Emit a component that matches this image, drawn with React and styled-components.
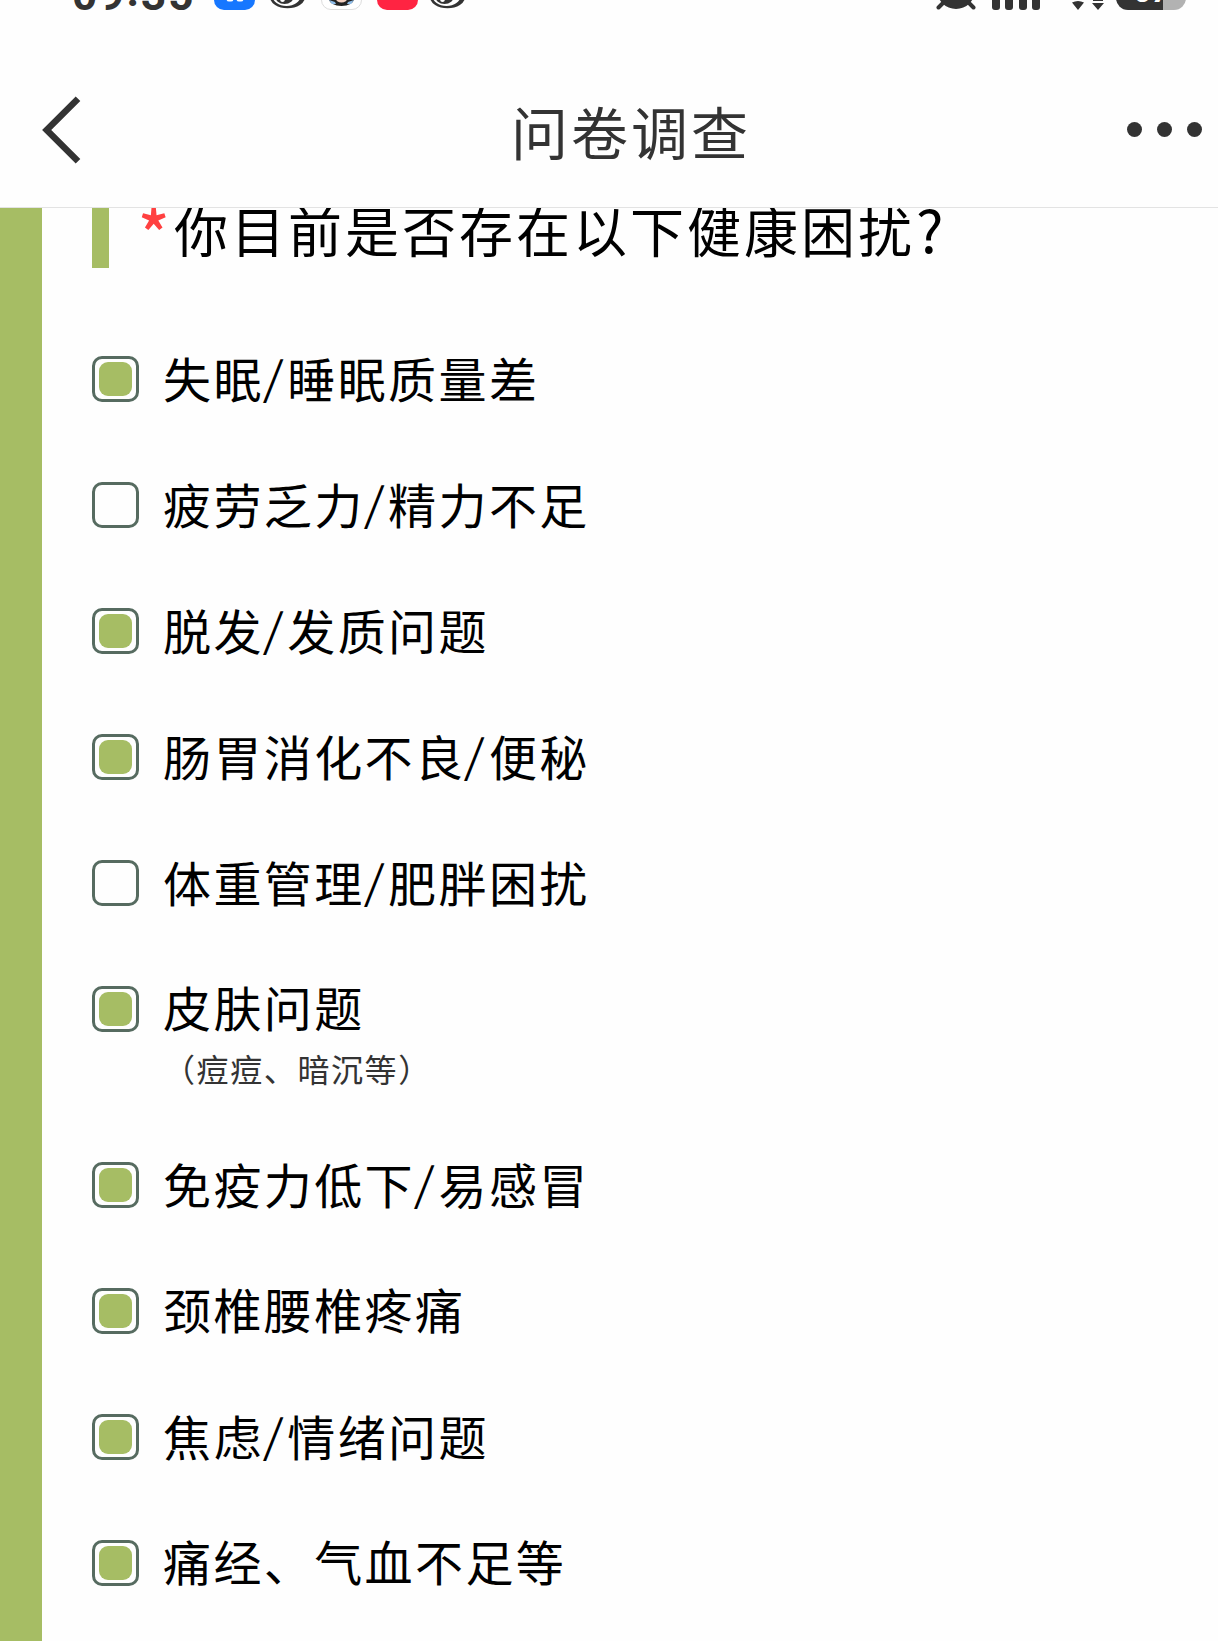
import React, { useState } from 'react'
import styled, { createGlobalStyle } from 'styled-components'

const list = [
  { name: '失眠/睡眠质量差', on: true },
  { name: '疲劳乏力/精力不足', on: false },
  { name: '脱发/发质问题', on: true },
  { name: '肠胃消化不良/便秘', on: true },
  { name: '体重管理/肥胖困扰', on: false },
  { name: '皮肤问题', note: '（痘痘、暗沉等）', on: true },
  { name: '免疫力低下/易感冒', on: true },
  { name: '颈椎腰椎疼痛', on: true },
  { name: '焦虑/情绪问题', on: true },
  { name: '痛经、气血不足等', on: true },
]

function Eye() {
  return (
    <svg width="35" height="10" viewBox="0 0 35 10">
      <ellipse cx="17.5" cy="-3" rx="17.5" ry="11.2" fill="#333" />
      <ellipse cx="16.5" cy="-4" rx="14" ry="10" fill="#fff" />
      <ellipse cx="14.5" cy="-4" rx="9.5" ry="8" fill="#333" />
      <circle cx="12.5" cy="-0.5" r="2.4" fill="#fff" />
    </svg>
  )
}

function StatusBar() {
  return (
    <Status>
      <Clock>09<span>:</span>35</Clock>
      <Apps>
        <AppIcon $color="#1677ff">
          <svg width="41" height="10" viewBox="0 0 41 10">
            <path d="M15 -1h2M25 -1h2" stroke="#fff" strokeWidth="5" strokeLinecap="round" />
          </svg>
        </AppIcon>
        <Eye />
        <AppIcon $color="#fff" $line>
          <svg width="39" height="9" viewBox="0 0 39 9">
            <ellipse cx="19.5" cy="-1" rx="12.5" ry="7" fill="#222" />
            <path d="M7 0l6 2 1 2-4 0zM32 0l-6 2-1 2 4 0z" fill="#8ebce8" />
            <ellipse cx="19.5" cy="-2" rx="6" ry="4.5" fill="#f3d0c0" />
          </svg>
        </AppIcon>
        <AppIcon $color="#ff2442" />
        <Eye />
      </Apps>
      <System>
        <svg width="40" height="10" viewBox="0 0 40 10">
          <circle cx="20" cy="-10" r="19" fill="#333" />
          <path d="M7 3L2.5 7.5M33 3l4.5 4.5" stroke="#333" strokeWidth="4" strokeLinecap="round" />
        </svg>
        <Signal>
          <i /><i /><i /><i />
        </Signal>
        <Arrows width="32" height="10" viewBox="0 0 32 10">
          <path d="M0 2.5q6-3 12 0L6 10zM20 3h12L26 10zM21 0h10v1H21z" fill="#333" />
        </Arrows>
        <Battery>67</Battery>
      </System>
    </Status>
  )
}

function Option({ item }) {
  const [on, setOn] = useState(item.on)
  const parts = item.name.split('/')
  return (
    <Row onClick={() => setOn(!on)}>
      <Box>{on && <Fill />}</Box>
      <Texts>
        <Label>
          {parts[0]}
          {parts[1] && <Slash>/</Slash>}
          {parts[1]}
        </Label>
        {item.note && <Note>{item.note}</Note>}
      </Texts>
    </Row>
  )
}

function App() {
  return (
    <>
      <Global />
      <Page>
        <StatusBar />
        <Nav>
          <svg width="40" height="68" viewBox="0 0 40 68">
            <path d="M36 2.7L4.7 34L36 65.3" fill="none" stroke="#333" strokeWidth="6.5" />
          </svg>
          <Title>问卷调查</Title>
          <Dots>
            <i /><i /><i />
          </Dots>
        </Nav>
        <Main>
          <Question>
            <Mark />
            <Star>*</Star>
            <h2>你目前是否存在以下健康困扰<Ask>?</Ask></h2>
          </Question>
          <List>
            {list.map((item) => (
              <Option key={item.name} item={item} />
            ))}
          </List>
        </Main>
      </Page>
    </>
  )
}

export default App

const Global = createGlobalStyle`
  * { box-sizing: border-box; }
  body {
    margin: 0;
    background: #fff;
    font-family: "Noto Sans CJK SC", sans-serif;
  }
`;

const Page = styled.div`
  display: flex;
  flex-direction: column;
  width: 1218px;
  height: 1641px;
  overflow: hidden;
  background: #fefefe;
`;

const Status = styled.div`
  display: flex;
  align-items: flex-end;
  height: 10px;
  flex: none;
  padding: 0 32px 0 72px;
  overflow: hidden;
`;

const Clock = styled.div`
  width: 142px;
  height: 41px;
  font: bold 44px/44px Roboto, sans-serif;
  letter-spacing: 2px;
  color: #333;
  span { vertical-align: 4px; line-height: 1; }
`;

const Apps = styled.div`
  display: flex;
  align-items: flex-end;
  gap: 14.5px;
  svg { display: block; flex: none; }
`;

const AppIcon = styled.div`
  display: flex;
  align-items: flex-end;
  width: 41px;
  height: 40px;
  border-radius: 10px;
  overflow: hidden;
  background: ${(p) => p.$color};
  border: ${(p) => (p.$line ? '1px solid #ddd' : 'none')};

  &:nth-child(n + 3) {
    position: relative;
    left: 2px;
  }
`;

const System = styled.div`
  display: flex;
  align-items: flex-end;
  margin-left: auto;
  svg { display: block; }
`;

const Signal = styled.div`
  display: flex;
  gap: 5.5px;
  margin-left: 16px;
  i {
    width: 8px;
    height: 14px;
    border-radius: 3px;
    background: #333;
  }
`;

const Arrows = styled.svg`
  margin: 0 12px 0 32px;
`;

const Battery = styled.div`
  width: 70px;
  height: 36px;
  border-radius: 12px;
  background: linear-gradient(90deg, #333 47px, #b2b2b2 47px);
  color: #fff;
  text-align: center;
  font: bold 32px/34px Roboto, sans-serif;
`;

const Nav = styled.header`
  display: flex;
  align-items: center;
  justify-content: space-between;
  flex: none;
  height: 198px;
  padding: 42px 16px 0 42px;
  border-bottom: 1px solid #e3e3e3;
  > svg { margin-bottom: -1px; }
`;

const Title = styled.h1`
  margin: 0 0 -1px 53px;
  font-size: 57px;
  line-height: 80px;
  font-weight: 400;
  letter-spacing: 3px;
  color: #333;
`;

const Dots = styled.div`
  display: flex;
  gap: 15px;
  margin-bottom: 1px;
  i {
    width: 15px;
    height: 15px;
    border-radius: 50%;
    background: #333;
  }
`;

const Main = styled.main`
  flex: 1;
  min-height: 0;
  overflow: hidden;
  border-left: 42px solid #a6bd64;
  padding-left: 50px;
`;

const Question = styled.div`
  display: flex;
  height: 60px;
  h2 {
    margin: -18px 0 0;
    font-size: 54px;
    line-height: 80px;
    font-weight: 400;
    letter-spacing: 3px;
    color: #000;
    white-space: nowrap;
  }
`;

const Ask = styled.span`
  margin-left: 1px;
  font-size: 58px;
  line-height: 1;
`;

const Mark = styled.div`
  width: 17px;
  background: #a6bd64;
`;

const Star = styled.span`
  width: 36px;
  margin: -17px 0 0 29px;
  font-size: 65px;
  font-weight: 500;
  line-height: 80px;
  color: #ff4040;
`;

const List = styled.div`
  padding-top: 88px;
`;

const Row = styled.div`
  display: flex;
  align-items: flex-start;
  margin-bottom: 80px;
  cursor: pointer;
`;

const Box = styled.div`
  display: flex;
  align-items: center;
  justify-content: center;
  width: 47px;
  height: 46px;
  margin-right: 24px;
  border: 3px solid #566b60;
  border-radius: 10px;
`;

const Fill = styled.div`
  width: 33px;
  height: 34px;
  border-radius: 9px;
  background: #a6bd64;
`;

const Texts = styled.div`
  margin: -3px 0 3px;
`;

const Label = styled.div`
  height: 46px;
  font-size: 48px;
  line-height: 46px;
  letter-spacing: 2.4px;
  color: #000;
`;

const Slash = styled.span`
  display: inline-block;
  width: 23.5px;
  font-size: 45px;
  line-height: 1;
  vertical-align: 3px;
  transform: translateX(1px) skewX(-5deg);
`;

const Note = styled.div`
  height: 50px;
  font-size: 32px;
  line-height: 79px;
  letter-spacing: 1.6px;
  color: #333;
`;
